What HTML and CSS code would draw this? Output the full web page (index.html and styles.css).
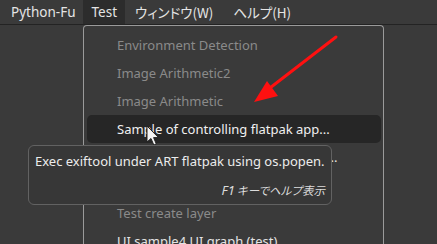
FILE: index.html
```html
<!DOCTYPE html>
<html lang="ja">
<head>
    <meta charset="UTF-8">
    <title>Test menu</title>
    <link rel="stylesheet" href="styles.css">
</head>
<body>
    <div class="menubar">
        <span class="menubar-item">Python-Fu</span>
        <span class="menubar-item active">Test</span>
        <span class="menubar-item jp">ウィンドウ(W)</span>
        <span class="menubar-item jp">ヘルプ(H)</span>
    </div>

    <div class="menu">
        <div class="menu-item disabled">Environment Detection</div>
        <div class="menu-item disabled">Image Arithmetic2</div>
        <div class="menu-item disabled">Image Arithmetic</div>
        <div class="menu-item hover">Sample of controlling flatpak app...</div>
        <div class="menu-item">Sample of controlling flatpak ART2...</div>
        <div class="menu-item disabled">Sample plug-in</div>
        <div class="menu-item disabled">Test create layer</div>
        <div class="menu-item">UI sample4 UI graph (test)</div>
    </div>

    <!-- 注釈の赤い矢印 -->
    <svg class="arrow" width="437" height="244" viewBox="0 0 437 244">
        <line x1="336" y1="37" x2="266" y2="91" stroke="#ff1010" stroke-width="3" stroke-linecap="round"/>
        <polygon points="254,102 267,81 278,96" fill="#ff1010"/>
    </svg>

    <svg class="cursor" width="14" height="22" viewBox="0 0 14 22">
        <path d="M1 1 L1 17 L5 13.5 L7.8 20 L10.3 19 L7.6 12.6 L12.5 12.6 Z" fill="#f4f4f4" stroke="#222" stroke-width="1"/>
    </svg>

    <div class="tooltip">
        <div class="tooltip-text">Exec exiftool under ART flatpak using os.popen.</div>
        <div class="tooltip-hint">F1<span class="jp hint-jp">キーでヘルプ表示</span></div>
    </div>
</body>
</html>
```

FILE: styles.css
```css
body {
    margin: 0;
    width: 437px;
    height: 244px;
    overflow: hidden;
    background-color: #3a3a3a;
    font-family: 'Noto Sans', 'Noto Sans CJK JP', sans-serif;
    font-size: 13px;
    color: #e4e4e4;
    position: relative;
}

.jp {
    font-family: 'Noto Sans CJK JP', sans-serif;
    font-feature-settings: "palt";
}

.menubar {
    display: flex;
    height: 25px;
    padding-left: 3px;
    border-bottom: 1px solid #232323;
    box-sizing: border-box;
    font-size: 13.5px;
}

.menubar-item {
    display: flex;
    align-items: center;
    padding: 0 8px;
}

.menubar-item.jp {
    padding: 0 10px;
}

.menubar-item.active {
    background-color: #2c2c2c;
}

.menu {
    position: absolute;
    left: 83px;
    top: 25px;
    width: 299px;
    height: 240px;
    padding-top: 5px;
    background-color: #3a3a3a;
    border: 1px solid #9a9a9a;
    border-bottom: none;
    border-radius: 4px 4px 0 0;
}

.menu-item {
    height: 28px;
    line-height: 28px;
    margin: 0 2px 0 3px;
    padding-left: 30px;
    border-radius: 5px;
    white-space: nowrap;
    overflow: hidden;
}

.menu-item.disabled {
    color: #8a8a8a;
}

.menu-item.hover {
    background-color: #262626;
    color: #f0f0f0;
}

.arrow {
    position: absolute;
    left: 0;
    top: 0;
}

.cursor {
    position: absolute;
    left: 146px;
    top: 125px;
}

.tooltip {
    position: absolute;
    left: 28px;
    top: 145px;
    width: 290px;
    height: 58px;
    padding: 0 6px 0 6px;
    background-color: #373737;
    border: 1px solid #626262;
    border-radius: 6px;
    display: flex;
    flex-direction: column;
}

.tooltip-text {
    margin-top: 5px;
    line-height: 20px;
    color: #ececec;
}

.tooltip-hint {
    margin-top: 10px;
    text-align: right;
    font-size: 13px;
    font-style: italic;
    color: #dcdcdc;
}

.hint-jp {
    font-size: 11.5px;
    margin-left: 2px;
}
```
